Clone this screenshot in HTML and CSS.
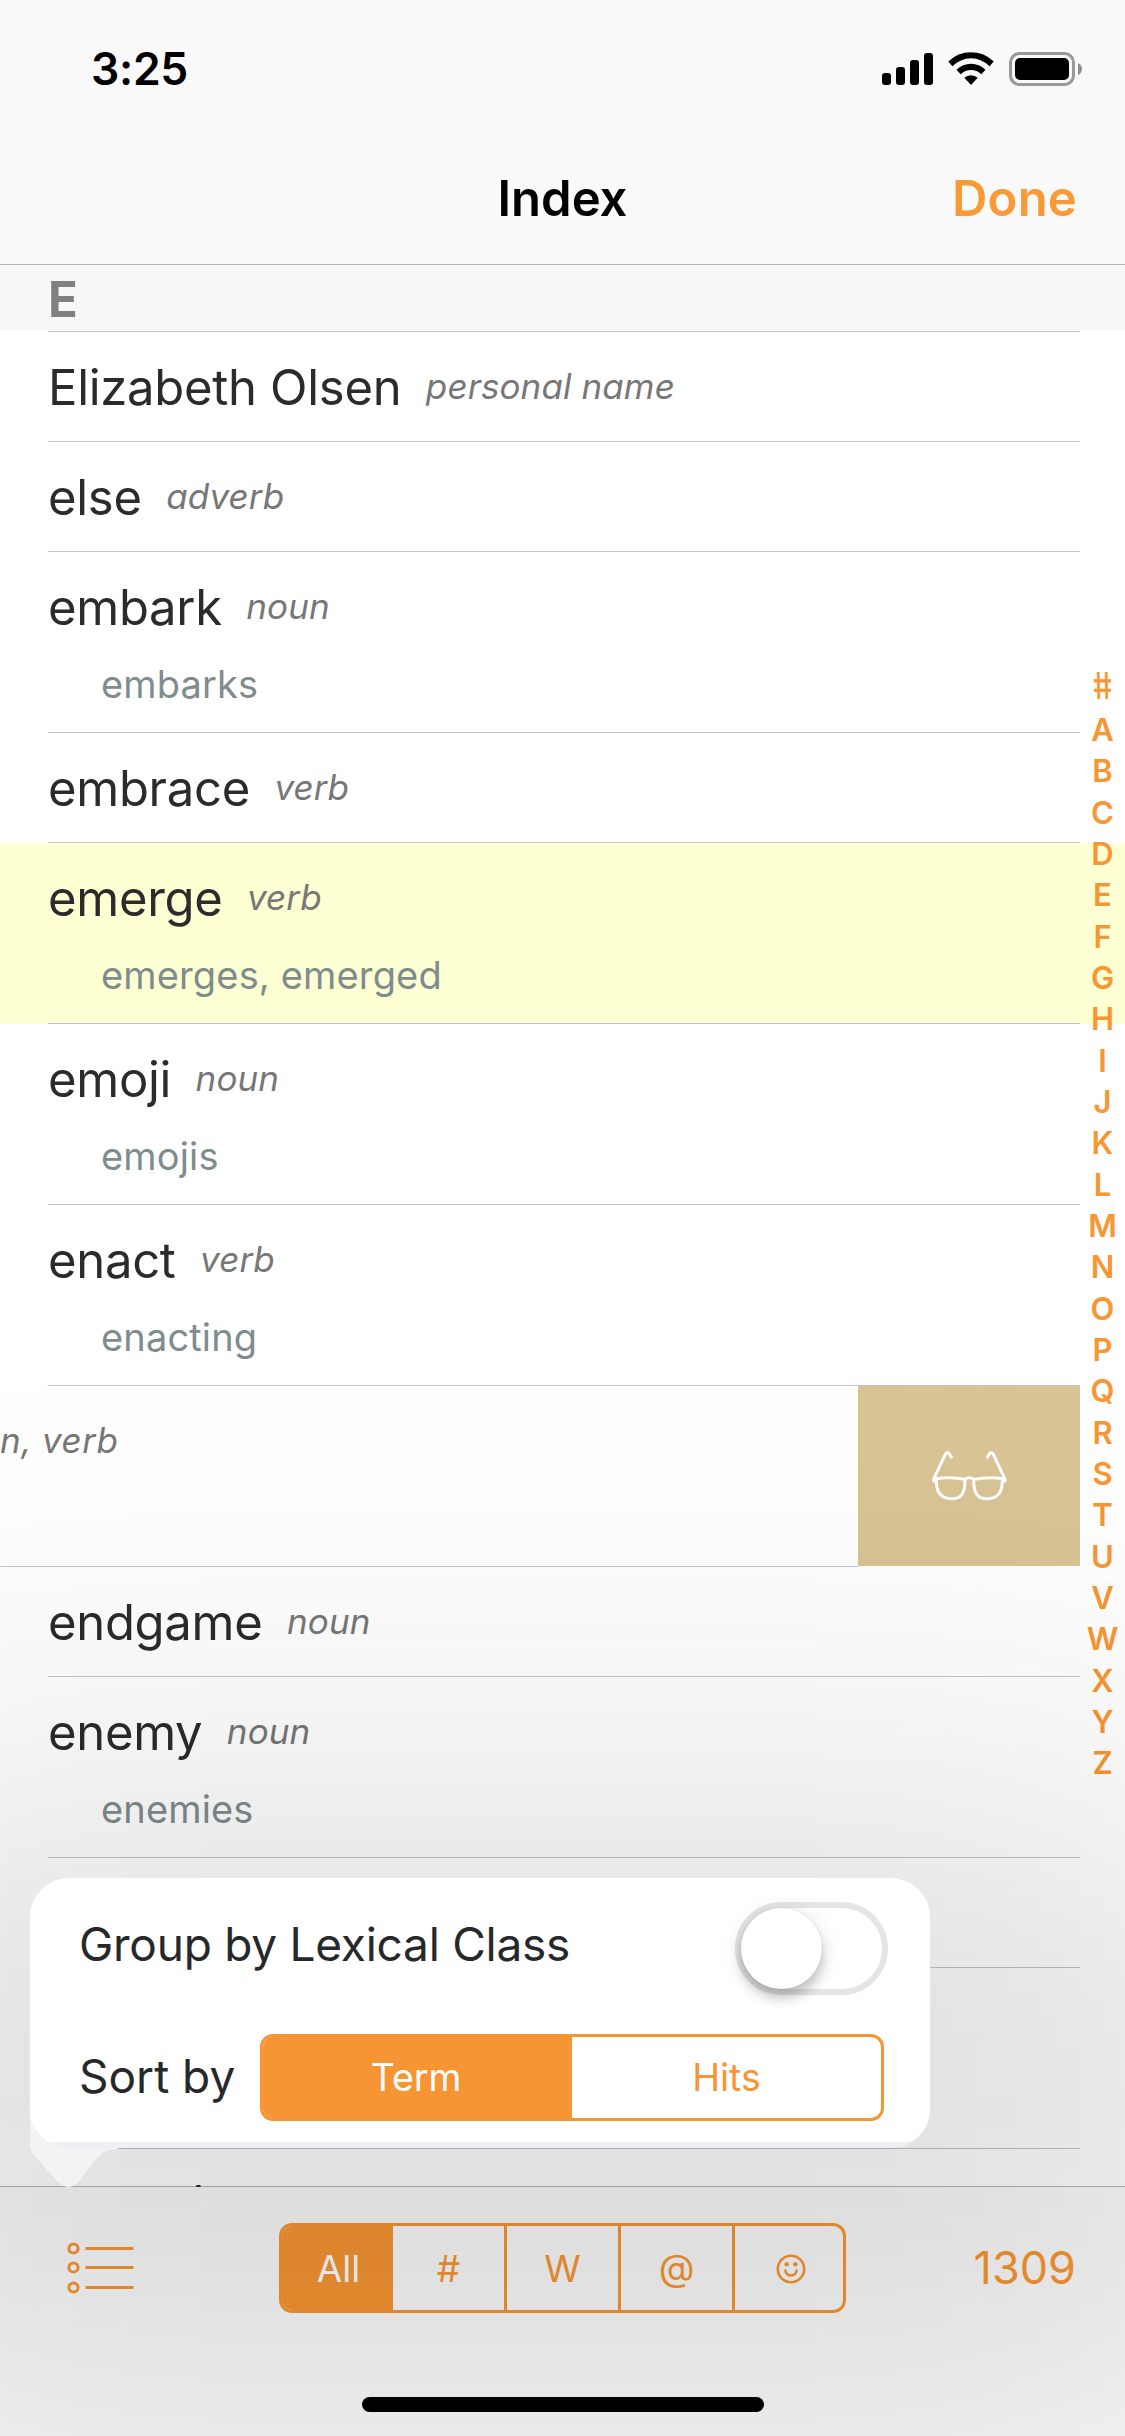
FILE: index.html
```html
<!DOCTYPE html>
<html lang="en">
<head>
<meta charset="utf-8">
<title>Index</title>
<link rel="stylesheet" href="styles.css">
</head>
<body>
<div class="screen">
  <header class="header">
    <div class="status">
      <span class="time">3:25</span>
      <svg class="status-icons" width="202" height="36" viewBox="881 51 202 36">
        <rect x="882" y="73" width="9" height="12" rx="3"/>
        <rect x="896" y="67" width="9" height="18" rx="3"/>
        <rect x="910" y="60" width="9" height="25" rx="3"/>
        <rect x="924" y="53" width="9" height="32" rx="3"/>
        <path d="M948.3 61.6A32 32 0 0 1 993.7 61.6L989.6 66.2A26 26 0 0 0 952.4 66.2Z"/>
        <path d="M956.5 69.8A20.5 20.5 0 0 1 985.5 69.8L981.3 74.3A14.4 14.4 0 0 0 960.7 74.3Z"/>
        <path d="M964.3 77.8A10 10 0 0 1 977.7 77.8L971 85Z"/>
        <rect x="1010.5" y="53.5" width="63" height="31" rx="9" fill="none" stroke="#999" stroke-width="3"/>
        <rect x="1015" y="58" width="54" height="22" rx="5"/>
        <path d="M1078 63Q1082 65 1082 69T1078 75Z" fill="#8e8e8e"/>
      </svg>
    </div>
    <nav class="nav">
      <span></span>
      <h1 class="title">Index</h1>
      <a class="done">Done</a>
    </nav>
  </header>

  <main class="list">
    <div class="section"><h2>E</h2></div>
    <div class="row"><p class="term">Elizabeth Olsen<i>personal name</i></p></div>
    <div class="row"><p class="term">else<i>adverb</i></p></div>
    <div class="row"><p class="term">embark<i>noun</i></p><p class="forms">embarks</p></div>
    <div class="row"><p class="term">embrace<i>verb</i></p></div>
    <div class="row marked"><p class="term">emerge<i>verb</i></p><p class="forms">emerges, emerged</p></div>
    <div class="row"><p class="term">emoji<i>noun</i></p><p class="forms">emojis</p></div>
    <div class="row"><p class="term">enact<i>verb</i></p><p class="forms">enacting</p></div>
    <div class="swiped">
      <p class="term"><i>n, verb</i></p>
      <div class="action">
        <svg width="78" height="56" viewBox="315 265 234 168" fill="none" stroke="#fff" stroke-width="9" stroke-linecap="round" stroke-linejoin="round">
          <path d="M379 293L373 283Q367 274 361 284L326 358V364L333 366M487 293L493 283Q499 274 505 284L540 358V364L533 366"/>
          <path d="M328 358Q375 350 420 359Q433 349 446 359Q491 350 538 358"/>
          <path d="M334 364C334 399 350 417 380 417C408 417 420 403 420 360M446 360C446 403 458 417 486 417C516 417 532 399 532 364"/>
        </svg>
      </div>
    </div>
    <div class="row"><p class="term">endgame<i>noun</i></p></div>
    <div class="row"><p class="term">enemy<i>noun</i></p><p class="forms">enemies</p></div>
    <div class="row single"></div>
    <div class="row double"></div>
    <div class="row last"><p class="term">enough</p></div>
    <div class="letters">
      <span class="hash">#</span><span>A</span><span>B</span><span>C</span><span>D</span><span>E</span><span>F</span><span>G</span><span>H</span><span>I</span><span>J</span><span>K</span><span>L</span><span>M</span><span>N</span><span>O</span><span>P</span><span>Q</span><span>R</span><span>S</span><span>T</span><span>U</span><span>V</span><span>W</span><span>X</span><span>Y</span><span>Z</span>
    </div>
  </main>

  <footer class="toolbar">
    <div class="tools">
      <svg class="list-icon" width="70" height="54" viewBox="66 2240 70 54" fill="none" stroke="#f89633" stroke-width="3">
        <circle cx="73.5" cy="2247.5" r="4.6"/><circle cx="73.5" cy="2266.5" r="4.6"/><circle cx="73.5" cy="2286.5" r="4.6"/>
        <path d="M85.5 2247.5H133.5M85.5 2266.5H133.5M85.5 2286.5H133.5"/>
      </svg>
      <div class="filter">
        <span class="on">All</span><span>#</span><span>W</span><span class="at">@</span>
        <span><svg width="30" height="30" viewBox="0 0 30 30" fill="none" stroke="#f89633" stroke-width="2.6" stroke-linecap="round">
          <circle cx="15" cy="15" r="13.2"/><path d="M9.3 16.5C10 23.2 20 23.2 20.7 16.5"/>
          <g fill="#f89633" stroke="none"><circle cx="10.7" cy="10.3" r="2.2"/><circle cx="19.3" cy="10.3" r="2.2"/></g>
        </svg></span>
      </div>
      <span class="count">1309</span>
    </div>
    <div class="home"></div>
  </footer>

  <div class="dim"></div>

  <div class="popover">
    <svg class="tail" width="90" height="82" viewBox="0 0 90 82"><path fill="#f2f4f4" d="M0 0V36Q0 43 4 48L26 73Q39 87 50 73L67 51Q74 42 88 42V0Z"/></svg>
    <div class="card">
      <div class="option">
        <span class="label">Group by Lexical Class</span>
        <span class="switch"><span class="knob"></span></span>
      </div>
      <div class="option sort">
        <span class="label">Sort by</span>
        <div class="choice"><span class="chosen">Term</span><span>Hits</span></div>
      </div>
    </div>
  </div>
</div>
</body>
</html>
```
FILE: styles.css
```css
* { box-sizing: border-box; }
body { margin: 0; background: #fff; font-family: Inter, "Liberation Sans", sans-serif; }
h1, h2, p { margin: 0; font-weight: 400; }
svg { display: block; }

.screen {
  position: relative;
  z-index: 0;
  display: flex;
  flex-direction: column;
  width: 1125px;
  height: 2436px;
  overflow: hidden;
  background: #fff;
}

/* header */
.header { flex: none; height: 265px; background: #f9f9f9; border-bottom: 1px solid #b2b2b2; }
.status { display: flex; justify-content: space-between; height: 132px; padding: 51px 42px 0 91px; }
.time { font-size: 44.5px; font-weight: 600; line-height: 37px; letter-spacing: -.3px; }
.nav { display: grid; grid-template-columns: 1fr auto 1fr; height: 132px; padding: 0 48px; line-height: 134px; font-size: 49px; font-weight: 600; }
.title { font-size: 49px; font-weight: 600; }
.done { justify-self: end; color: #f89a38; letter-spacing: .2px; }

/* list */
.list { position: relative; z-index: 0; flex: none; height: 1921px; }
.section { position: relative; height: 67px; margin: 0 45px 0 48px; border-bottom: 1px solid #c5c5c8; }
.section::before { content: ""; position: absolute; z-index: -1; left: -48px; right: -45px; top: 0; height: 65px; background: #f7f7f7; }
.section h2 { font-size: 49px; font-weight: 700; line-height: 70px; color: #808080; }
.row::after { content: ""; display: block; height: 1px; margin: 0 45px 0 48px; background: #c5c5c8; }
.row.marked { background: #feffd2; }
.term { height: 109px; padding-left: 48px; font-size: 49px; line-height: 111px; letter-spacing: -.3px; color: #2b2b2b; white-space: nowrap; }
.term i { position: relative; top: -6px; margin-left: 24.5px; font-size: 35px; letter-spacing: .1px; color: #777; }
.forms { height: 71px; padding-left: 101px; font-size: 38px; line-height: 47px; letter-spacing: .15px; color: #7f8c8d; }
.single { padding-top: 109px; }
.double { padding-top: 180px; }
.last { height: 38px; overflow: hidden; }
.last .term { line-height: 109px; }
.swiped { display: flex; justify-content: space-between; height: 181px; padding-right: 45px; background: linear-gradient(#c5c5c8, #c5c5c8) 0 100% / 858px 1px no-repeat; }
.swiped .term { padding-left: 0; }
.swiped .term i { margin-left: 0; letter-spacing: .5px; }
.action { display: flex; align-items: center; justify-content: center; width: 222px; height: 180px; background: #d9c495; }

/* alphabetical index on the right edge */
.letters { position: absolute; top: 402.5px; right: 0; width: 45px; display: flex; flex-direction: column; text-align: center; color: #f89633; font-size: 31px; font-weight: 600; }
.letters span { height: 41.35px; line-height: 41.35px; }
.letters .hash { font-size: 37px; font-weight: 500; transform: translateY(-3px) skewX(9deg) scaleX(.84); }

/* toolbar; its hairline lies behind the last visible row */
.toolbar { position: relative; z-index: -1; flex: 1; padding-top: 1px; background: linear-gradient(#b4b4b4 1px, #fafafa 1px); }
.tools { display: grid; grid-template-columns: 213px 567px 1fr; align-items: center; height: 161px; padding: 0 49px 0 66px; }
.filter { display: grid; grid-template-columns: 111px 114px 114px 114px 108px; height: 90px; border: 3px solid #f89633; border-radius: 13px; overflow: hidden; color: #f89633; font-size: 37px; line-height: 84px; }
.filter span { display: flex; align-items: center; justify-content: center; border-right: 3px solid #f89633; }
.filter span:last-child { border-right: 0; padding-left: 3px; }
.filter .on { background: #f89633; color: #fff; padding-left: 5px; }
.filter .at { padding-bottom: 2px; }
.count { justify-self: end; font-size: 45px; color: #f89633; }
.home { width: 402px; height: 15px; margin: 49px auto 0; border-radius: 8px; background: #000; }

/* soft shade cast around the popover */
.dim { position: absolute; left: -240px; top: 1820px; width: 1500px; height: 580px; background: rgba(0, 0, 0, .14); filter: blur(220px); }

/* popover */
.popover { position: absolute; left: 30px; top: 1878px; width: 900px; height: 270px; }
.tail { position: absolute; left: 0; top: 229px; }
.card { position: relative; height: 270px; padding-left: 49px; border-radius: 39px; background: linear-gradient(#fff 264px, #efeff4 264px); }
.option { display: flex; justify-content: space-between; align-items: center; height: 133px; padding-right: 42px; }
.label { margin-top: -2px; font-size: 46px; letter-spacing: -.25px; color: #262829; }
.switch { width: 153px; height: 93px; margin-top: 8px; border: 6px solid #e5e5e5; border-radius: 47px; }
.knob { display: block; width: 81px; height: 81px; border-radius: 50%; background: #fff; box-shadow: 0 9px 12px rgba(0, 0, 0, .2), 0 3px 24px rgba(0, 0, 0, .1), 0 0 2px rgba(0, 0, 0, .12); }
.sort { padding-right: 46px; }
.sort .label { margin-top: -4px; letter-spacing: 0; }
.choice { display: grid; grid-template-columns: 309px 1fr; width: 624px; height: 87px; border: 3px solid #f79535; border-radius: 13px; overflow: hidden; font-size: 37.5px; line-height: 82px; text-align: center; color: #f79535; }
.chosen { background: #f79535; color: #fff; }
.choice .chosen { padding-right: 3px; }
```
